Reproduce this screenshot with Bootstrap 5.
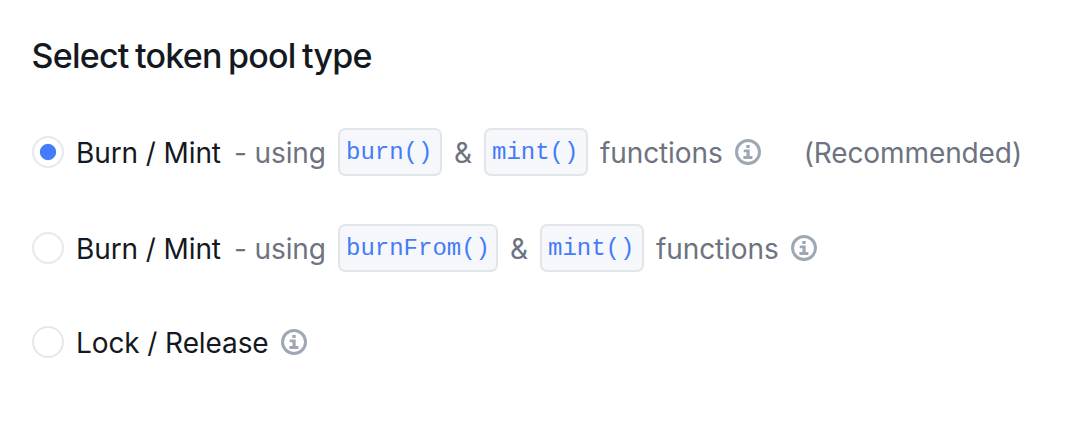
<!DOCTYPE html>
<html lang="en">
<head>
<meta charset="utf-8">
<meta name="viewport" content="width=device-width, initial-scale=1">
<title>Select token pool type</title>
<link rel="stylesheet" href="https://cdn.jsdelivr.net/npm/bootstrap@5.3.0/dist/css/bootstrap.min.css">
<style>
body{font-family:Inter,"Liberation Sans",sans-serif;background:#fff;color:#141921;overflow:hidden}
main{padding:32px}
h1{font-size:34px;line-height:48px;font-weight:500;letter-spacing:-.75px;word-spacing:-2px;margin:0 0 48px -.5px}
.option{height:48px;margin-bottom:48px;font-size:28px;line-height:48px;white-space:nowrap;letter-spacing:-.1px}
.option:last-child{margin-top:-2px;margin-bottom:0}
.option .form-check-input{width:32px;height:32px;margin:0 12px 0 0;border:2px solid #e4e8ed;flex:none}
.option .form-check-input:checked{background:radial-gradient(circle,#457bf7 7.6px,#fff 8.6px);border-color:#e4e8ed}
.title,.muted{padding-top:1px}
.title{width:158px}
.muted{color:#6d7380}
.using{width:104px}
.amp{width:42px;text-align:center}
.fn{margin-left:12px;margin-right:11px}
.code{font-family:"Liberation Mono",monospace;font-size:24px;letter-spacing:0;color:#457bf7;min-width:104px;height:48px;line-height:46px;border:2px solid #e2e6eb;border-radius:7px;background:#f5f7fb;padding:0 5px 0 6px}
.code.long{width:160px}
.info{width:28px;height:28px;flex:none}
.rec{margin-left:42px}
.lock{width:auto;margin-right:11px}
</style>
</head>
<body>
<svg class="d-none"><symbol id="info" viewBox="0 0 28 28"><circle cx="14" cy="14" r="11.5" fill="none" stroke="#9fa7b5" stroke-width="3"/><path d="M12.3 6.9h3.4v3h-3.4zM9.7 11.4h6v6.6h2.7v2.9H9.4V18h3.1v-3.7H9.7z" fill="#9fa7b5"/></symbol></svg>
<main>
<h1>Select token pool type</h1>
<div class="option d-flex align-items-center"><input class="form-check-input" type="radio" name="pool" id="a" checked><label class="d-flex align-items-center" for="a"><span class="title">Burn / Mint</span><span class="muted using">- using</span><span class="code">burn()</span><span class="muted amp">&amp;</span><span class="code">mint()</span><span class="muted fn">functions</span><svg class="info"><use href="#info"/></svg><span class="muted rec">(Recommended)</span></label></div>
<div class="option d-flex align-items-center"><input class="form-check-input" type="radio" name="pool" id="b"><label class="d-flex align-items-center" for="b"><span class="title">Burn / Mint</span><span class="muted using">- using</span><span class="code long">burnFrom()</span><span class="muted amp">&amp;</span><span class="code">mint()</span><span class="muted fn">functions</span><svg class="info"><use href="#info"/></svg></label></div>
<div class="option d-flex align-items-center"><input class="form-check-input" type="radio" name="pool" id="c"><label class="d-flex align-items-center" for="c"><span class="title lock">Lock / Release</span><svg class="info"><use href="#info"/></svg></label></div>
</main>
<script src="https://cdn.jsdelivr.net/npm/bootstrap@5.3.0/dist/js/bootstrap.bundle.min.js"></script>
</body></html>
